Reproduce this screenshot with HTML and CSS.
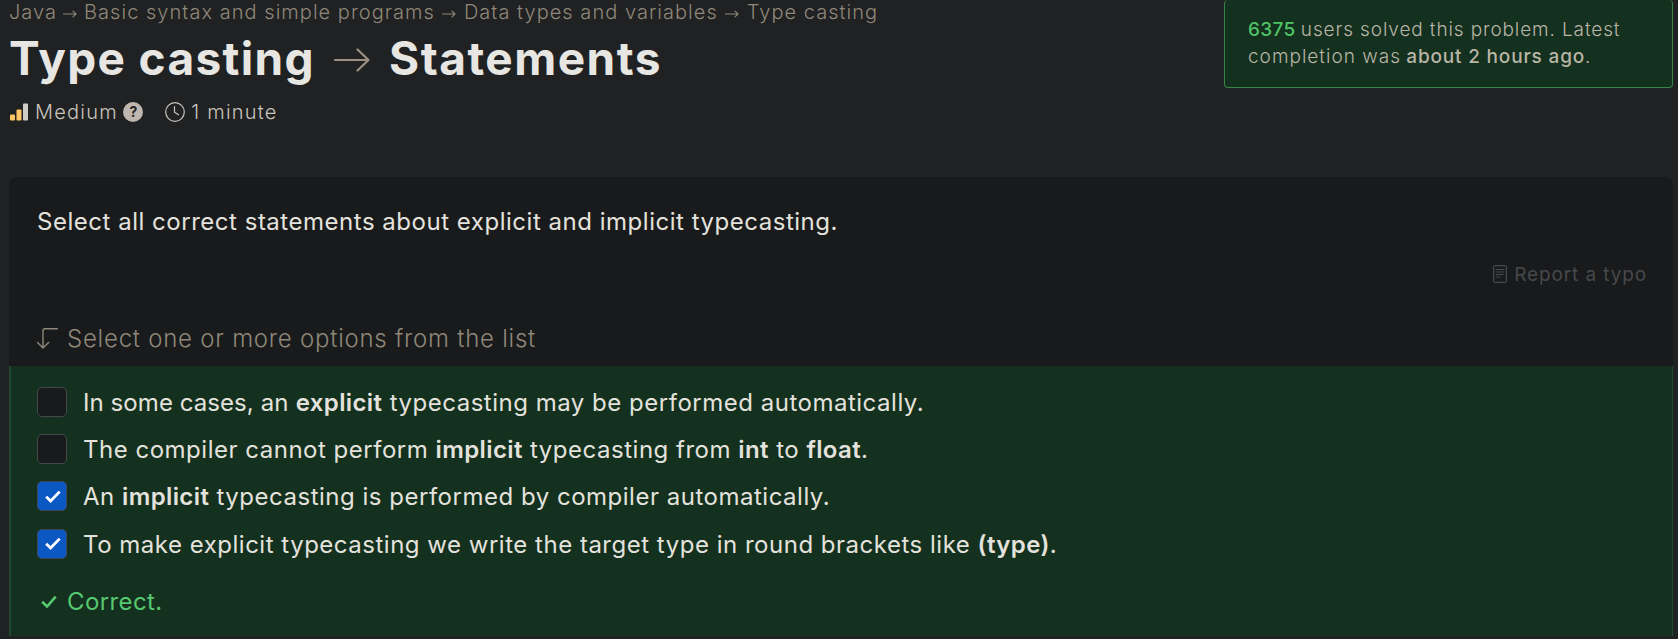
FILE: index.html
```html
<!DOCTYPE html>
<html lang="en">
<head>
<meta charset="utf-8">
<title>Type casting → Statements</title>
<link rel="stylesheet" href="styles.css">
</head>
<body>
<header class="header">
  <div class="intro">
    <nav class="crumbs">
      <span class="c1">Java</span>
      <svg class="sep" viewBox="0 0 14 8"><path d="M0 4h13M10 1.200L13 4l-3 2.800"/></svg>
      <span class="c2">Basic syntax and simple programs</span>
      <svg class="sep" viewBox="0 0 14 8"><path d="M0 4h13M10 1.200L13 4l-3 2.800"/></svg>
      <span class="c3">Data types and variables</span>
      <svg class="sep" viewBox="0 0 14 8"><path d="M0 4h13M10 1.200L13 4l-3 2.800"/></svg>
      <span class="c4">Type casting</span>
    </nav>
    <h1 class="title">
      <span class="t1">Type casting</span>
      <svg class="title-arrow" viewBox="0 0 36 24"><path d="M1 12h33M23.500 1.500L34.500 12l-11 10.500"/></svg>
      <span class="t2">Statements</span>
    </h1>
    <div class="meta">
      <svg class="bars" viewBox="0 0 18 18"><rect x="0" y="11.500" width="5" height="6" rx="1" fill="#ffc666"/><rect x="6.500" y="6.500" width="5" height="11" rx="1" fill="#ffc666"/><rect x="13" y="0.500" width="5" height="17" rx="1" fill="#d0cdc8"/></svg>
      <span class="m1">Medium</span>
      <span class="help">?</span>
      <svg class="clock" viewBox="0 0 20 20"><circle cx="10" cy="10" r="9.300"/><path d="M9.500 4.500v5.800l4 2.500"/></svg>
      <span class="m2">1 minute</span>
    </div>
  </div>
  <aside class="solved">
    <div><b class="count">6375</b> <span class="s1">users solved this problem. Latest</span></div>
    <div><span class="s2">completion was</span> <b class="s3">about 2 hours ago</b>.</div>
  </aside>
</header>
<main class="panel">
  <p class="question">Select all correct statements about explicit and implicit typecasting.</p>
  <div class="report">
    <svg class="doc" viewBox="0 0 14 18"><rect x=".6" y=".6" width="12.800" height="16.800" rx="1.500"/><path d="M3 4.500h8M3 7h8M3 9.500h7M3 12h4"/></svg>
    <span>Report a typo</span>
  </div>
  <div class="hint">
    <svg class="turn" viewBox="0 0 21 21"><path d="M20.400 .8H8Q6 .8 6 2.800V20M.6 14.500L6 20l5.600-5.500"/></svg>
    <span>Select one or more options from the list</span>
  </div>
  <section class="answers">
    <label class="option"><span class="box"></span><span class="text"><span class="lead">In some cases, an</span> <b>explicit</b> typecasting may be performed automatically.</span></label>
    <label class="option"><span class="box"></span><span class="text">The compiler cannot perform <b>implicit</b> typecasting from <b>int</b> to <b>float</b>.</span></label>
    <label class="option"><span class="box checked"><svg class="tick" viewBox="0 0 16 13"><path d="M1.200 6.800L5.600 11 14.700 1.600"/></svg></span><span class="text">An <b>implicit</b> typecasting is performed by compiler automatically.</span></label>
    <label class="option"><span class="box checked"><svg class="tick" viewBox="0 0 16 13"><path d="M1.200 6.800L5.600 11 14.700 1.600"/></svg></span><span class="text">To make explicit typecasting we write the target type in round brackets like <b>(type)</b>.</span></label>
    <div class="correct"><svg class="tick" viewBox="0 0 16 13"><path d="M1.200 6.800L6 11.500 14.700 1.600"/></svg><span>Correct.</span></div>
  </section>
</main>
</body>
</html>
```
FILE: styles.css
```css
* { box-sizing: border-box; }
body {
  margin: 0;
  height: 639px;
  overflow: hidden;
  background: #1f2122;
  color: #e4e2dd;
  font-family: Inter, "Liberation Sans", sans-serif;
  padding: 0 5px 0 9px;
}
svg { fill: none; stroke-linecap: round; stroke-linejoin: round; flex: none; }
span, b { white-space: nowrap; }
.header { display: flex; justify-content: space-between; height: 177px; }
.intro { padding-left: 1px; }
.crumbs {
  display: flex;
  align-items: center;
  height: 24px;
  gap: 7.5px;
  font-size: 20px;
  font-weight: 300;
  letter-spacing: 1.03px;
  color: #8f8779;
}
.c1 { margin: 0 -2px 0 -1px; }
.sep { width: 14px; height: 8px; margin-top: 3px; stroke: #8f8779; stroke-width: 1.1; }
.title {
  display: flex;
  align-items: center;
  height: 56px;
  margin: 6px 0 0 -1px;
  font-size: 46px;
  font-weight: 700;
  color: #e8e6e3;
}
.t1 { letter-spacing: 1.35px; }
.t2 { letter-spacing: 1.5px; }
.title-arrow { width: 36px; height: 24px; margin: 3px 19px 0 19px; stroke: #9c9183; stroke-width: 2.2; }
.meta {
  display: flex;
  align-items: center;
  height: 24px;
  margin-top: 14px;
  font-size: 20px;
  font-weight: 300;
  letter-spacing: 1.22px;
  color: #c9c4bc;
}
.bars { width: 18px; height: 18px; margin-right: 7px; }
.help {
  width: 20px;
  height: 20px;
  margin: 0 22px 0 5.5px;
  border-radius: 50%;
  background: #beb6af;
  color: #1f2122;
  font-size: 14px;
  font-weight: 700;
  letter-spacing: 0;
  line-height: 20px;
  text-align: center;
}
.clock { width: 20px; height: 20px; margin-right: 6px; stroke: #c9c4bc; stroke-width: 1.2; }
.solved {
  width: 449px;
  height: 88px;
  padding: 16px 0 0 23px;
  border: 1px solid #378445;
  border-top: 0;
  border-radius: 4px;
  background: #14301f;
  color: #b9b5a6;
  font-size: 19px;
  font-weight: 300;
  line-height: 27px;
}
.solved b { font-weight: 500; }
.solved .count { color: #4fc367; letter-spacing: .3px; }
.s1 { letter-spacing: .88px; }
.s2 { letter-spacing: 1px; }
.s3 { letter-spacing: .82px; }
.panel { height: 459px; border-radius: 8px 8px 0 0; background: #191a1c; }
.question {
  margin: 0;
  padding: 27px 0 0 28px;
  font-size: 24px;
  font-weight: 400;
  letter-spacing: .52px;
  line-height: 36px;
}
.report {
  display: flex;
  align-items: center;
  justify-content: flex-end;
  gap: 7px;
  height: 24px;
  margin-top: 22px;
  padding-right: 26px;
  color: #48494b;
  font-size: 19px;
  letter-spacing: .88px;
}
.doc { width: 14px; height: 18px; stroke: #48494b; stroke-width: 1.2; }
.hint {
  display: flex;
  align-items: center;
  gap: 9px;
  height: 36px;
  margin-top: 34px;
  padding-left: 28px;
  color: #8f8779;
  font-size: 24px;
  font-weight: 300;
  letter-spacing: .76px;
}
.turn { width: 21px; height: 21px; stroke: #8f8779; stroke-width: 1.4; }
.answers {
  height: 270px;
  margin-top: 10px;
  padding: 12px 0 0 26px;
  border-left: 2px solid #22472f;
  border-right: 1px solid #22472f;
  background: #14301f;
}
.option { display: flex; align-items: center; gap: 16px; height: 47.3px; font-size: 24px; }
.text { padding-top: 1.4px; letter-spacing: .51px; }
.text b { font-weight: 600; letter-spacing: .38px; }
.lead { letter-spacing: .07px; }
.box {
  display: flex;
  align-items: center;
  justify-content: center;
  width: 30px;
  height: 30px;
  padding-left: 1px;
  border: 1px solid #43484a;
  border-radius: 5px;
  background: #191a1c;
}
.box.checked { background: #0b58c2; border-color: #3c4a5d; }
.tick { width: 16px; height: 13px; stroke: #fff; stroke-width: 2.8; stroke-linecap: butt; stroke-linejoin: miter; }
.correct { display: flex; align-items: center; gap: 10px; height: 36px; margin-top: 16px; padding-left: 4px; font-size: 24px; letter-spacing: .4px; color: #56c870; }
.correct .tick { stroke: #56c870; stroke-width: 2.6; }
```
